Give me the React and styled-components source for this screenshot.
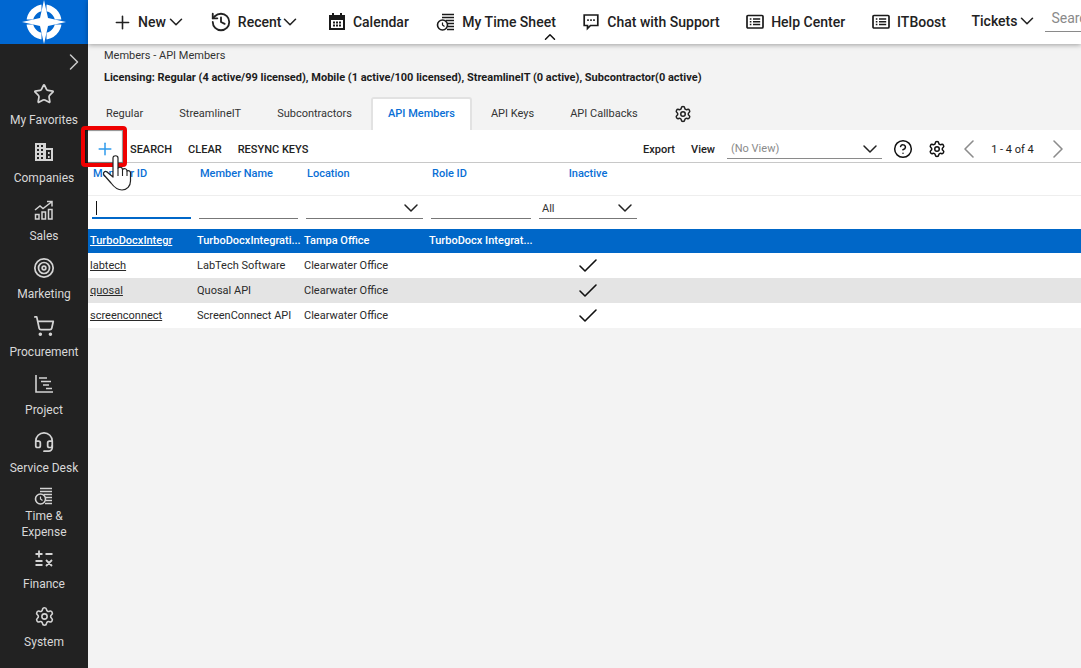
import React from "react";
import styled, { createGlobalStyle } from "styled-components";
import { Plus, ChevronDown, ChevronUp, ChevronLeft, ChevronRight, History, Settings, CircleHelp, Check, Star, Target, ShoppingCart, Headset } from "lucide-react";

const Global = createGlobalStyle`
  html, body { margin: 0; padding: 0; height: 100%; background: #f3f3f3; }
  body { font-family: Roboto, "Liberation Sans", sans-serif; overflow: hidden; }
  * { box-sizing: border-box; }
`;

const Page = styled.div`
  position: relative;
  display: flex;
  width: 1081px;
  height: 668px;
  overflow: hidden;
`;

const Sidebar = styled.aside`
  width: 88px;
  flex: none;
  background: #222222;
  display: flex;
  flex-direction: column;
  color: #dcdcdc;
`;
const LogoBox = styled.div`
  height: 44px;
  background: #0067d1;
  display: flex;
  align-items: center;
  justify-content: center;
`;
const Expand = styled.div`
  height: 36px;
  display: flex;
  align-items: center;
  justify-content: flex-end;
  color: #c8c8c8;
`;
const SideList = styled.nav`
  display: flex;
  flex-direction: column;
`;
const SideItem = styled.div`
  height: 58px;
  display: flex;
  flex-direction: column;
  align-items: center;
  color: #d8d8d8;
  svg { color: #d4d4d4; }
`;
const SideIcon = styled.div`
  height: 28px;
  width: 100%;
  flex: none;
  margin-top: ${p => p.$up ? -p.$up : 0}px;
  display: flex;
  align-items: center;
  justify-content: center;
`;
const SideLabel = styled.div`
  font-size: 12px;
  line-height: 16px;
  margin-top: ${p => p.$mt ?? 4}px;
  text-align: center;
`;

const Main = styled.main`
  flex: 1;
  min-width: 0;
  display: flex;
  flex-direction: column;
  background: #f3f3f3;
`;
const TopBar = styled.header`
  position: relative;
  z-index: 2;
  height: 44px;
  flex: none;
  background: #fff;
  box-shadow: 0 1px 5px rgba(0,0,0,.35);
  display: flex;
  align-items: center;
  white-space: nowrap;
`;
const NavItem = styled.div`
  display: flex;
  align-items: center;
  height: 44px;
  flex: none;
  margin-left: ${p => p.$ml}px;
  margin-top: ${p => p.$raised ? -2 : 0}px;
  font-size: 14px;
  font-weight: 500;
  color: #222;
  gap: ${p => p.$gap ?? 8}px;
`;
const NavChevron = styled(ChevronDown)`
  margin-left: ${p => p.$ml}px;
  flex: none;
`;
const SearchBox = styled.div`
  flex: 1;
  min-width: 0;
  height: 24px;
  margin-left: 7px;
  margin-top: -4px;
  border-bottom: 1px solid #8a8a8a;
  overflow: hidden;
  font-size: 14px;
  line-height: 20px;
  padding-left: 6px;
  color: #8a8a8a;
`;
const Collapse = styled.div`
  position: absolute;
  left: 453px;
  top: 28px;
  line-height: 0;
  color: #111;
`;

const Crumbs = styled.div`
  height: 22px;
  padding: 4px 0 0 16px;
  font-size: 11px;
  line-height: 16px;
  color: #333;
`;
const Licensing = styled.div`
  height: 31px;
  padding: 4px 0 0 16px;
  font-size: 11px;
  line-height: 16px;
  font-weight: 700;
  color: #1c1c1c;
`;
const Tabs = styled.div`
  height: 33px;
  display: flex;
  align-items: stretch;
  font-size: 11px;
  color: #333;
`;
const Tab = styled.div`
  padding: 0 18px;
  display: flex;
  align-items: center;
  ${p => p.$active && `
    background: #fff;
    color: #0a6fd6;
    font-weight: 500;
    margin: 0 1px;
    border: 2px solid #e2e2e2;
    border-bottom: none;
    border-radius: 3px 3px 0 0;
    padding: 0 15px 2px;
  `}
`;
const TabGear = styled.div`
  display: flex;
  align-items: center;
  margin-left: 18px;
  color: #222;
`;

const Toolbar = styled.div`
  height: 33px;
  background: #fff;
  border-bottom: 1px solid #c8c8c8;
  padding-top: 6px;
  display: flex;
  align-items: center;
  font-size: 11px;
  font-weight: 500;
  color: #222;
`;
const AddBtn = styled.div`
  width: 42px;
  display: flex;
  align-items: center;
  justify-content: center;
  padding-right: 8px;
  color: #2f9bec;
`;
const ToolBtn = styled.div`
  margin-right: 16px;
`;
const ToolRight = styled.div`
  margin-left: auto;
  display: flex;
  align-items: center;
  padding-right: 8px;
`;
const ToolLink = styled.div`
  margin-right: 16px;
`;
const ViewSelect = styled.div`
  width: 155px;
  height: 19px;
  margin-left: -4px;
  margin-right: 4px;
  padding-left: 4px;
  border-bottom: 1px solid #8a8a8a;
  display: flex;
  align-items: center;
  justify-content: space-between;
  font-weight: 400;
  color: #8a8a8a;
  svg { color: #222; flex: none; }
`;
const IconBtn = styled.div`
  display: flex;
  align-items: center;
  justify-content: center;
  width: ${p => p.$w ?? 34}px;
  color: ${p => p.$muted ? "#8c8c8c" : "#111"};
  svg { flex: none; }
`;
const Pager = styled.div`
  font-weight: 400;
  color: #222;
  width: 45px;
  margin: 0 8px 0 6px;
  text-align: center;
  white-space: nowrap;
`;

const gridCols = "107px 107px 125px 108px 106px";
const HeadRow = styled.div`
  height: 33px;
  background: #fff;
  border-bottom: 1px solid #eeeeee;
  display: grid;
  grid-template-columns: ${gridCols};
  align-items: start;
  padding-top: 4px;
  font-size: 11px;
  font-weight: 500;
  color: #0a6fd6;
`;
const HeadCell = styled.div`
  padding-left: ${p => p.$center ? 0 : 5}px;
  line-height: 13px;
  text-align: ${p => p.$center ? "center" : "left"};
`;
const FilterRow = styled.div`
  height: 33px;
  background: #fff;
  display: grid;
  grid-template-columns: ${gridCols};
  align-items: start;
`;
const FilterCell = styled.div`
  position: relative;
  margin: 0 4px;
  height: 23px;
  border-bottom: ${p => p.$focus ? "2px solid #0067c8" : "1px solid #777"};
  padding: 2px 0 0 3px;
  display: flex;
  align-items: center;
  justify-content: space-between;
  font-size: 11px;
  color: #333;
  svg { color: #222; flex: none; }
`;
const Caret = styled.span`
  width: 1px;
  height: 14px;
  background: #111;
  margin-left: 1px;
`;
const Row = styled.div`
  height: ${p => p.$selected ? 24 : 25}px;
  display: grid;
  grid-template-columns: ${gridCols} 1fr;
  align-items: center;
  font-size: 11px;
  color: #2a2a2a;
  background: ${p => p.$selected ? "#0067c8" : p.$shade ? "#e4e4e4" : "#fff"};
  ${p => p.$selected && "color: #fff; font-weight: 500; padding-bottom: 1px;"}
`;
const Cell = styled.div`
  padding-left: 2px;
  white-space: nowrap;
  overflow: hidden;
  text-overflow: ellipsis;
`;
const IdLink = styled(Cell)`
  text-decoration: underline;
`;
const CheckCell = styled.div`
  display: flex;
  justify-content: center;
  color: #111;
`;

const Highlight = styled.div`
  position: absolute;
  left: 81px;
  top: 126px;
  width: 46px;
  height: 41px;
  border: 4px solid #ee0000;
  border-radius: 4px;
  box-shadow: inset 0 0 1px 1px rgba(0,0,0,.45);
  z-index: 3;
  pointer-events: none;
`;
const HandWrap = styled.div`
  position: absolute;
  left: 103px;
  top: 155px;
  line-height: 0;
  z-index: 4;
`;

const Logo = () => (
  <svg width="64" height="44" viewBox="0 0 64 44">
    <circle cx="32" cy="22" r="14.3" fill="none" stroke="#fff" strokeWidth="6.5" />
    <path d="M32 2V42M12 22H52" stroke="#0067d1" strokeWidth="5" />
    <path d="M32 0L36 18L54 22L36 26L32 44L28 26L10 22L28 18Z" fill="#fff" />
  </svg>
);

const BuildingIcon = () => (
  <svg width="20" height="20" viewBox="0 0 20 20" fill="#d4d4d4">
    <path fillRule="evenodd" d="M1 1h11v5h7v13H1zM3 3v2h2V3zM7 3v2h2V3zM3 7v2h2V7zM7 7v2h2V7zM3 11v2h2v-2zM7 11v2h2v-2zM3 15v2h2v-2zM7 15v2h2v-2zM12 8v9h5V8zM14 10h1.6v2H14zM14 14h1.6v2H14z"/>
  </svg>
);
const SalesIcon = () => (
  <svg width="20" height="20" viewBox="0 0 20 20" fill="none" stroke="#d4d4d4" strokeWidth="1.5">
    <path d="M1 10l5-4 3 2.5L17.5 2M13 1.5h5v5" />
    <rect x="1.5" y="14.5" width="3.5" height="4.5" />
    <rect x="8" y="12" width="3.5" height="7" />
    <rect x="14.5" y="9.5" width="3.5" height="9.5" />
  </svg>
);
const ProjectIcon = () => (
  <svg width="20" height="20" viewBox="0 0 20 20" fill="none" stroke="#d4d4d4" strokeWidth="1.6">
    <path d="M2 1v17h17" />
    <path d="M5 4h8M7 7.5h10M9 11h6M12 14.5h6" />
  </svg>
);
const TimeIcon = ({ color = "#d4d4d4" }) => (
  <svg width="20" height="20" viewBox="0 0 20 20" fill="none" stroke={color} strokeWidth="1.6">
    <path d="M6 2.5h12M6 5.5h12M9.5 8.5H18M12 11.5h6M12 14.5h6M11 17.5h7" />
    <circle cx="6.5" cy="13" r="5" />
    <path d="M6.5 10.5V13l2 1.5" strokeWidth="1.2" />
  </svg>
);
const FinanceIcon = () => (
  <svg width="20" height="20" viewBox="0 0 20 20" fill="none" stroke="#d4d4d4" strokeWidth="1.8">
    <path d="M1.5 6h7M5 2.5v7M11.5 6h7M1.5 13h7M1.5 17h7M12 12l6 6M18 12l-6 6" />
  </svg>
);
const CalendarIcon = () => (
  <svg width="18" height="18" viewBox="0 0 18 18" fill="#1a1a1a">
    <path fillRule="evenodd" d="M4 0h2v2h6V0h2v2h3v15H1V2h3zM3 7v8h12V7zM5 8.5h2v2H5zM8 8.5h2v2H8zM11 8.5h2v2h-2zM5 11.5h2v2H5zM8 11.5h2v2H8zM11 11.5h2v2h-2z"/>
  </svg>
);
const ChatIcon = () => (
  <svg width="16" height="18" viewBox="0 0 16 18" fill="none" stroke="#1a1a1a" strokeWidth="1.7">
    <path d="M1.2 2h13.6v10.5H7.5L4.5 15.5v-3H1.2z" />
    <path d="M4.2 7.2h1.6M7.2 7.2h1.6M10.2 7.2h1.6" strokeWidth="1.8"/>
  </svg>
);
const ListBoxIcon = () => (
  <svg width="18" height="16" viewBox="0 0 18 16" fill="none" stroke="#1a1a1a" strokeWidth="1.7">
    <rect x="1" y="1.5" width="16" height="12.5" rx="1" />
    <path d="M3.8 5h1.6M3.8 7.8h1.6M3.8 10.6h1.6M7 5h7.2M7 7.8h7.2M7 10.6h7.2" strokeWidth="1.5" />
  </svg>
);
const Hand = () => (
  <svg width="29" height="36" viewBox="0 0 29 36">
    <path
      d="M10 3C10 0 15 0 15 3V13C17 11.5 19.5 12.5 19.5 14.5C21 13 24 13.5 24 16C25.5 15 28 16 27.5 19V26C27.5 31 24 35 19 35C14 35 11 32 8 28L1 20C-0.5 18 2 15.5 4 17L10 22Z"
      fill="#fff" stroke="#222" strokeWidth="1.2" strokeLinejoin="round"
    />
    <path d="M15 13V21M19.5 14.5V21M24 16V21" fill="none" stroke="#222" strokeWidth="1.1" />
  </svg>
);

const sideItems = [
  { label: "My Favorites", icon: <Star size={22} strokeWidth={1.9} /> },
  { label: "Companies", icon: <BuildingIcon /> },
  { label: "Sales", icon: <SalesIcon /> },
  { label: "Marketing", icon: <Target size={22} strokeWidth={1.9} /> },
  { label: "Procurement", icon: <ShoppingCart size={22} strokeWidth={1.9} /> },
  { label: "Project", icon: <ProjectIcon /> },
  { label: "Service Desk", icon: <Headset size={22} strokeWidth={1.9} /> },
  { label: "Time &\nExpense", icon: <TimeIcon />, mt: -2, up: 4 },
  { label: "Finance", icon: <FinanceIcon /> },
  { label: "System", icon: <Settings size={21} strokeWidth={1.8} /> },
];

const rows = [
  { id: "TurboDocxIntegr", name: "TurboDocxIntegrati...", loc: "Tampa Office", role: "TurboDocx Integrat...", selected: true },
  { id: "labtech", name: "LabTech Software", loc: "Clearwater Office", check: true },
  { id: "quosal", name: "Quosal API", loc: "Clearwater Office", check: true, shade: true },
  { id: "screenconnect", name: "ScreenConnect API", loc: "Clearwater Office", check: true },
];

export default function App() {
  return (
    <Page>
      <Global />
      <Sidebar>
        <LogoBox><Logo /></LogoBox>
        <Expand><ChevronRight size={28} strokeWidth={1.3} /></Expand>
        <SideList>
          {sideItems.map(s => (
            <SideItem key={s.label}>
              <SideIcon $up={s.up}>{s.icon}</SideIcon>
              <SideLabel $mt={s.mt}>
                {s.label.split("\n").map(l => <div key={l}>{l}</div>)}
              </SideLabel>
            </SideItem>
          ))}
        </SideList>
      </Sidebar>
      <Main>
        <TopBar>
          <NavItem $ml={23.5} $gap={5.5}><Plus size={21} strokeWidth={1.8} />New<NavChevron $ml={-6} size={22} strokeWidth={1.7} /></NavItem>
          <NavItem $ml={23} $gap={5.5}><History size={22} strokeWidth={2} />Recent<NavChevron $ml={-7.5} size={22} strokeWidth={1.7} /></NavItem>
          <NavItem $ml={26.5} $gap={7}><CalendarIcon />Calendar</NavItem>
          <NavItem $ml={27.5} $gap={6}><TimeIcon color="#1a1a1a" />My Time Sheet</NavItem>
          <NavItem $ml={27} $gap={8.5}><ChatIcon />Chat with Support</NavItem>
          <NavItem $ml={26} $gap={7.5}><ListBoxIcon />Help Center</NavItem>
          <NavItem $ml={26.5} $gap={7.5}><ListBoxIcon />ITBoost</NavItem>
          <NavItem $ml={25.5} $gap={0} $raised>Tickets<NavChevron $ml={-1} size={22} strokeWidth={1.7} /></NavItem>
          <SearchBox>Search</SearchBox>
          <Collapse><ChevronUp size={18} strokeWidth={2} /></Collapse>
        </TopBar>
        <Crumbs>Members - API Members</Crumbs>
        <Licensing>Licensing: Regular (4 active/99 licensed), Mobile (1 active/100 licensed), StreamlineIT (0 active), Subcontractor(0 active)</Licensing>
        <Tabs>
          <Tab>Regular</Tab>
          <Tab>StreamlineIT</Tab>
          <Tab>Subcontractors</Tab>
          <Tab $active>API Members</Tab>
          <Tab>API Keys</Tab>
          <Tab>API Callbacks</Tab>
          <TabGear><Settings size={18} strokeWidth={2} /></TabGear>
        </Tabs>
        <Toolbar>
          <AddBtn><Plus size={20} strokeWidth={1.8} /></AddBtn>
          <ToolBtn>SEARCH</ToolBtn>
          <ToolBtn>CLEAR</ToolBtn>
          <ToolBtn>RESYNC KEYS</ToolBtn>
          <ToolRight>
            <ToolLink>Export</ToolLink>
            <ToolLink>View</ToolLink>
            <ViewSelect>(No View)<ChevronDown size={24} strokeWidth={1.5} /></ViewSelect>
            <IconBtn><CircleHelp size={20} strokeWidth={1.8} /></IconBtn>
            <IconBtn><Settings size={18} strokeWidth={2} /></IconBtn>
            <IconBtn $muted $w={30}><ChevronLeft size={32} strokeWidth={1.2} /></IconBtn>
            <Pager>1 - 4 of 4</Pager>
            <IconBtn $muted $w={30}><ChevronRight size={32} strokeWidth={1.2} /></IconBtn>
          </ToolRight>
        </Toolbar>
        <HeadRow>
          <HeadCell>Member ID</HeadCell>
          <HeadCell>Member Name</HeadCell>
          <HeadCell>Location</HeadCell>
          <HeadCell>Role ID</HeadCell>
          <HeadCell $center>Inactive</HeadCell>
        </HeadRow>
        <FilterRow>
          <FilterCell $focus><Caret /></FilterCell>
          <FilterCell />
          <FilterCell><span /><ChevronDown size={24} strokeWidth={1.5} /></FilterCell>
          <FilterCell />
          <FilterCell>All<ChevronDown size={24} strokeWidth={1.5} /></FilterCell>
        </FilterRow>
        {rows.map(r => (
          <Row key={r.id} $selected={r.selected} $shade={r.shade}>
            <IdLink>{r.id}</IdLink>
            <Cell>{r.name}</Cell>
            <Cell>{r.loc}</Cell>
            <Cell>{r.role}</Cell>
            <CheckCell>{r.check && <Check size={24} strokeWidth={1.6} />}</CheckCell>
          </Row>
        ))}
      </Main>
      <Highlight />
      <HandWrap><Hand /></HandWrap>
    </Page>
  );
}
